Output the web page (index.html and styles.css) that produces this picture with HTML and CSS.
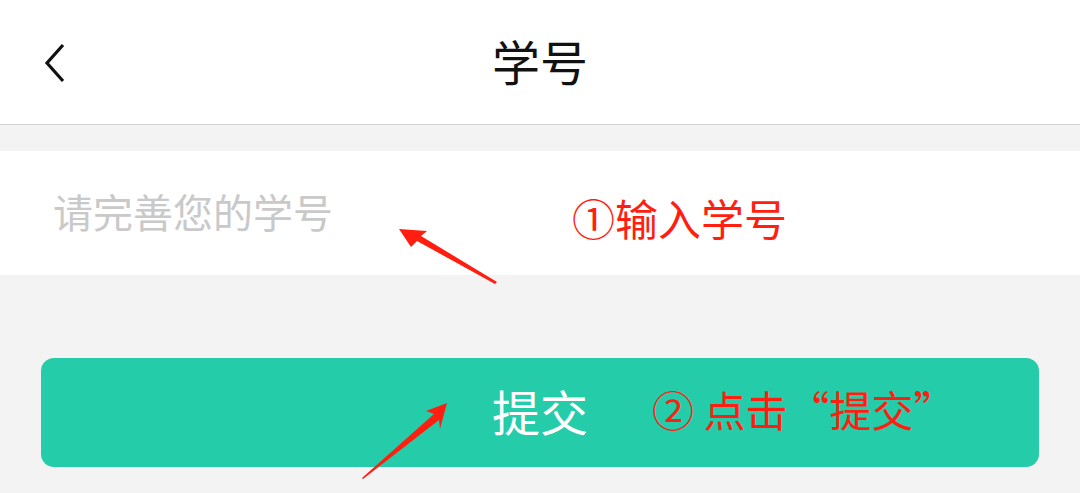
FILE: index.html
```html
<!DOCTYPE html>
<html lang="zh-CN">
<head>
	<meta charset="UTF-8">
	<meta name="viewport" content="width=device-width, initial-scale=1.0">
	<link rel="stylesheet" href="styles.css">
</head>
<body>
	<div class="page">
		<div class="header">
			<svg class="back" width="24" height="40" viewBox="0 0 24 40">
				<polyline points="20,2 4,20 20,38" fill="none" stroke="#111" stroke-width="3.2" stroke-linejoin="miter"/>
			</svg>
			<h1>学号</h1>
		</div>

		<div class="field-row">
			<input type="text" class="field" placeholder="请完善您的学号">
			<span class="note note-1">①输入学号</span>
		</div>

		<div class="actions">
			<button class="submit">提交</button>
			<span class="note note-2">② 点击“提交”</span>
		</div>

		<svg class="arrow arrow-1" width="120" height="70" viewBox="0 0 120 70">
			<polygon points="2,2 30,4 24,9 100,55 98,57 20,14 14,20" fill="#ff1e0f"/>
		</svg>
		<svg class="arrow arrow-2" width="100" height="90" viewBox="0 0 100 90">
			<polygon points="86,2 79,28 78,19 2,78 1,77 73,13 65,10" fill="#ff1e0f"/>
		</svg>
	</div>
</body>
</html>
```

FILE: styles.css
```css
* {
	margin: 0;
	padding: 0;
	box-sizing: border-box;
	font-family: "Noto Sans CJK SC", "Noto Sans", sans-serif;
}

body {
	background: #f3f3f3;
}

.page {
	position: relative;
	width: 100%;
	height: 493px;
	overflow: hidden;
}

.header {
	height: 125px;
	background: #fff;
	border-bottom: 1px solid #d2d2d2;
	display: flex;
	align-items: center;
	justify-content: center;
	position: relative;
}

.header h1 {
	font-size: 48px;
	font-weight: 400;
	color: #111;
	line-height: 1;
	margin-top: -4px;
}

.back {
	position: absolute;
	left: 43px;
	top: 43px;
}

.field-row {
	margin-top: 26px;
	height: 124px;
	background: #fff;
	display: flex;
	align-items: center;
	padding-left: 53px;
}

.field {
	border: none;
	outline: none;
	background: transparent;
	font-size: 40px;
	width: 519px;
	color: #333;
	margin-top: -4px;
}

.field::placeholder {
	color: #c9c9c9;
}

.note {
	color: #ff1e0f;
	font-size: 43px;
	line-height: 1;
}

.note-1 {
	margin-top: 8px;
}

.actions {
	position: relative;
	padding: 83px 41px 0 41px;
}

.submit {
	width: 998px;
	height: 109px;
	border: none;
	border-radius: 13px;
	background: #25cca9;
	color: #fff;
	font-size: 48px;
	line-height: 1;
	padding-bottom: 6px;
}

.note-2 {
	position: absolute;
	left: 652px;
	top: 113px;
	font-size: 42px;
}

.arrow {
	position: absolute;
}

.arrow-1 {
	left: 397px;
	top: 227px;
}

.arrow-2 {
	left: 361px;
	top: 401px;
}
```
